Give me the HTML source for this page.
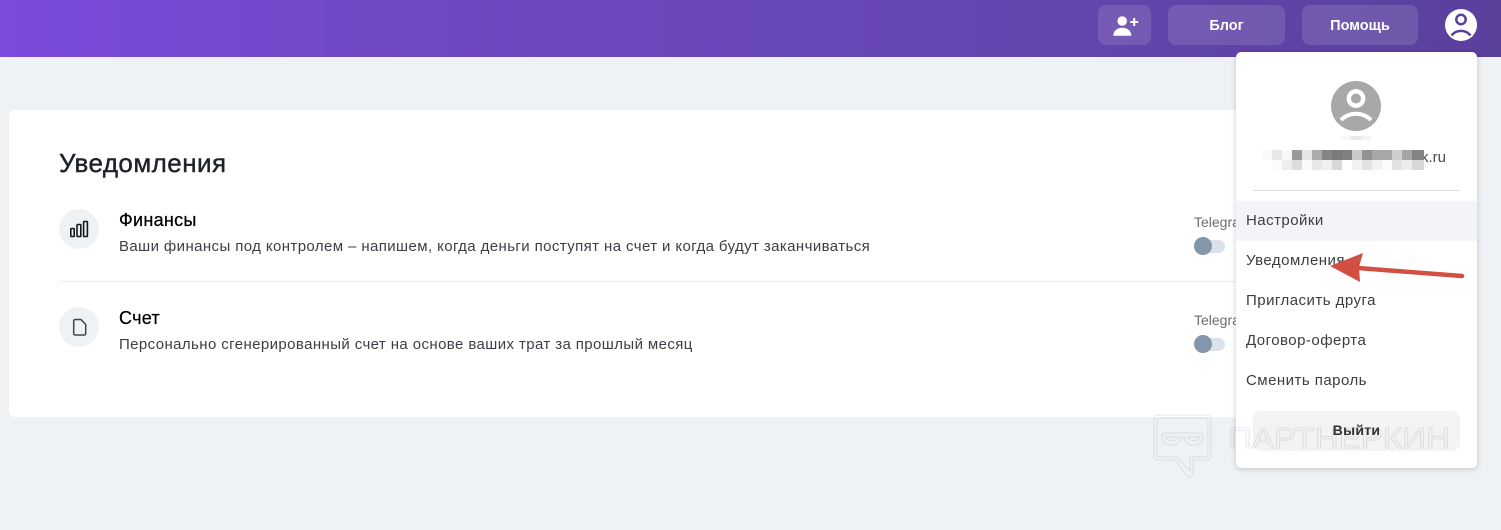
<!DOCTYPE html>
<html lang="ru"><head><meta charset="utf-8"><title>Уведомления</title>
<style>
html,body{margin:0;padding:0;width:1501px;height:530px;overflow:hidden;background:#eff2f5;font-family:"Liberation Sans",sans-serif;}
.abs,.abs *{box-sizing:border-box}
.abs{position:absolute;white-space:nowrap}
#hdr{left:0;top:0;width:1501px;height:57px;background:linear-gradient(90deg,#7b4bdc 0%,#6f49c6 25%,#6747b4 60%,#5b409c 100%)}
.btn{top:5px;height:40px;border-radius:8px;background:rgba(255,255,255,.12);color:#fff;font-weight:bold;font-size:14.5px;line-height:42px;text-align:center}
#card{left:9px;top:110px;width:1300px;height:307px;background:#fff;border-radius:6px}
.h{font-size:18px;line-height:20px;color:#000;letter-spacing:.3px;-webkit-text-stroke:.25px #000}
.d{font-size:15px;line-height:17px;color:#3b3f45;letter-spacing:.4px}
.circ{left:59px;width:40px;height:40px;border-radius:50%;background:#eff2f5}
.tg{font-size:14px;color:#6d6d6d;left:1194px}
.tr{left:1197px;width:28px;height:13px;background:#dbe2ea;border-radius:7px}
.th{left:1194px;width:18px;height:18px;border-radius:50%;background:#8496ab}
#menu{left:1236px;top:52px;width:241px;height:416px;background:#fff;border-radius:5px;box-shadow:0 1px 6px rgba(0,0,0,.2)}
.mi{left:1246px;font-size:15px;color:#3d3d3d;letter-spacing:.47px;line-height:20px}
.px{position:absolute;width:10px;height:10px}
</style></head><body>
<div class="abs" id="hdr"></div>
<div class="abs btn" style="left:1098px;width:53px"></div>
<svg class="abs" style="left:1112px;top:14px" width="28" height="24" viewBox="0 0 28 24"><circle cx="10.200" cy="7" r="4.800" fill="#fff"/><path d="M1.300 21.700c0-5 4-8 9-8s9 3 9 8z" fill="#fff"/><path d="M18.200 8h8M22.200 4v8" stroke="#fff" stroke-width="2"/></svg>
<div class="abs btn" style="left:1168px;width:117px">Блог</div>
<div class="abs btn" style="left:1302px;width:116px">Помощь</div>
<svg class="abs" style="left:1445px;top:9px" width="32" height="32" viewBox="0 0 32 32"><circle cx="16" cy="16" r="16" fill="#fff"/><circle cx="16" cy="10.500" r="4.700" fill="none" stroke="#5b409c" stroke-width="2.500"/><path d="M6.500 26.500A12 12 0 0 1 25.500 26.500" fill="none" stroke="#5b409c" stroke-width="2.500"/></svg>

<div class="abs" id="card"></div>
<div class="abs" style="left:59px;top:148px;font-size:26px;line-height:30px;color:#1d2129;letter-spacing:.45px;-webkit-text-stroke:.4px #1d2129">Уведомления</div>

<div class="abs circ" style="top:209px"></div>
<svg class="abs" style="left:69px;top:219px" width="20" height="20" viewBox="0 0 20 20" fill="none" stroke="#15181c" stroke-width="1.600"><rect x="1.800" y="9.500" width="3.400" height="8" rx=".8"/><rect x="8" y="5.500" width="3.800" height="12" rx=".8"/><rect x="14.600" y="2.500" width="3.800" height="15" rx=".8"/></svg>
<div class="abs h" style="left:119px;top:210px">Финансы</div>
<div class="abs d" style="left:119px;top:238px">Ваши финансы под контролем – напишем, когда деньги поступят на счет и когда будут заканчиваться</div>
<div class="abs" style="left:59px;top:281px;width:1180px;height:1px;background:#eceff2"></div>

<div class="abs circ" style="top:307px"></div>
<svg class="abs" style="left:69px;top:317px" width="20" height="20" viewBox="0 0 20 20" fill="none" stroke="#3f444a" stroke-width="1.500" stroke-linejoin="round"><path d="M4.700 4a1.500 1.500 0 0 1 1.500-1.500H12L16.700 7.500V16.500a1.500 1.500 0 0 1-1.500 1.500h-9a1.500 1.500 0 0 1-1.500-1.500z"/></svg>
<div class="abs h" style="left:119px;top:308px">Счет</div>
<div class="abs d" style="left:119px;top:336px">Персонально сгенерированный счет на основе ваших трат за прошлый месяц</div>

<div class="abs tg" style="top:214px">Telegram</div>
<div class="abs tr" style="top:240px"></div>
<div class="abs th" style="top:237px"></div>
<div class="abs tg" style="top:312px">Telegram</div>
<div class="abs tr" style="top:338px"></div>
<div class="abs th" style="top:335px"></div>

<div class="abs" id="menu"></div>
<svg class="abs" style="left:1331px;top:81px" width="50" height="50" viewBox="0 0 50 50"><circle cx="25" cy="25" r="25" fill="#a8a8a8"/><circle cx="25" cy="17.500" r="7.200" fill="none" stroke="#fff" stroke-width="4.400"/><path d="M10 39A21 21 0 0 1 40 39" fill="none" stroke="#fff" stroke-width="4"/></svg>
<div class="abs" style="left:1341px;top:136px;width:30px;height:4px;background:linear-gradient(90deg,#f8f8f8 33%,#e8e8e8 33% 66%,#f4f4f4 66%)"></div>
<div class="abs" style="left:1421px;top:149px;font-size:15px;color:#4a4a4a">k.ru</div>
<div class="abs" style="left:1261px;top:150px;width:165px;height:20px">
<i class="px" style="left:1px;top:0;background:#fafafa"></i><i class="px" style="left:11px;top:0;background:#e8e8e8"></i><i class="px" style="left:21px;top:0;background:#f8f8f8"></i><i class="px" style="left:31px;top:0;background:#9a9a9a"></i><i class="px" style="left:41px;top:0;background:#e6e6e6"></i><i class="px" style="left:51px;top:0;background:#ababab"></i><i class="px" style="left:61px;top:0;background:#858585"></i><i class="px" style="left:71px;top:0;background:#7a7a7a"></i><i class="px" style="left:81px;top:0;background:#808080"></i><i class="px" style="left:91px;top:0;background:#cacaca"></i><i class="px" style="left:101px;top:0;background:#929292"></i><i class="px" style="left:111px;top:0;background:#a8a8a8"></i><i class="px" style="left:121px;top:0;background:#a8a8a8"></i><i class="px" style="left:131px;top:0;background:#cecece"></i><i class="px" style="left:141px;top:0;background:#a5a5a5"></i><i class="px" style="left:151px;top:0;background:#838383;width:12px"></i>
<i class="px" style="left:11px;top:10px;background:#fcfcfc"></i><i class="px" style="left:21px;top:10px;background:#eeeeee"></i><i class="px" style="left:31px;top:10px;background:#dcdcdc"></i><i class="px" style="left:41px;top:10px;background:#fafafa"></i><i class="px" style="left:51px;top:10px;background:#e8e8e8"></i><i class="px" style="left:61px;top:10px;background:#f0f0f0"></i><i class="px" style="left:71px;top:10px;background:#d8d8d8"></i><i class="px" style="left:81px;top:10px;background:#fff"></i><i class="px" style="left:91px;top:10px;background:#f2f2f2"></i><i class="px" style="left:101px;top:10px;background:#e2e2e2"></i><i class="px" style="left:111px;top:10px;background:#f2f2f2"></i><i class="px" style="left:121px;top:10px;background:#fcfcfc"></i><i class="px" style="left:131px;top:10px;background:#e2e2e2"></i><i class="px" style="left:141px;top:10px;background:#ececec"></i><i class="px" style="left:151px;top:10px;background:#d8d8d8;width:12px"></i>
</div>
<div class="abs" style="left:1253px;top:190px;width:207px;height:1px;background:#dcdcdc"></div>
<div class="abs" style="left:1236px;top:201px;width:241px;height:40px;background:#f2f4f8"></div>
<div class="abs mi" style="top:211px">Настройки</div>
<div class="abs mi" style="top:251px">Уведомления</div>
<div class="abs mi" style="top:291px">Пригласить друга</div>
<div class="abs mi" style="top:331px">Договор-оферта</div>
<div class="abs mi" style="top:371px">Сменить пароль</div>
<div class="abs" style="left:1253px;top:411px;width:207px;height:40px;border-radius:8px;background:#f3f3f3;color:#2f2f2f;font-size:14px;font-weight:bold;line-height:38px;text-align:center;letter-spacing:.3px">Выйти</div>

<svg class="abs" style="left:0;top:0" width="1501" height="530" viewBox="0 0 1501 530">
<path d="M1358 268L1462 276" stroke="#d05043" stroke-width="4.500" stroke-linecap="round" fill="none"/>
<path d="M1330 266L1363 253L1359 267L1360 282Z" fill="#d05043"/>
<g fill="none" stroke="#5a6a7a" stroke-opacity=".16" stroke-width="1">
<path d="M1158 415H1207q4 0 4 4V456q0 4-4 4H1193V473q0 4-3 4q-2 0-4-2L1175 460H1158q-4 0-4-4V419q0-4 4-4Z"/>
<path d="M1160 418H1205q3 0 3 3V454q0 3-3 3H1190V471L1176 457H1160q-3 0-3-3V421q0-3 3-3Z"/>
<path d="M1166 433H1199q4 0 4 4c0 5-3 8-8 8h-3q-6 0-8-8h-3q-2 8-8 8h-3c-5 0-8-3-8-8q0-4 4-4Z"/>
<path d="M1166 437c1 5 10 5 12 0ZM1188 437c1 5 10 5 12 0Z"/>
<text x="1228" y="448" font-family="Liberation Sans" font-size="29" textLength="222" lengthAdjust="spacingAndGlyphs" stroke-width=".9">ПАРТНЕРКИН</text>
</g>
</svg>
</body></html>
